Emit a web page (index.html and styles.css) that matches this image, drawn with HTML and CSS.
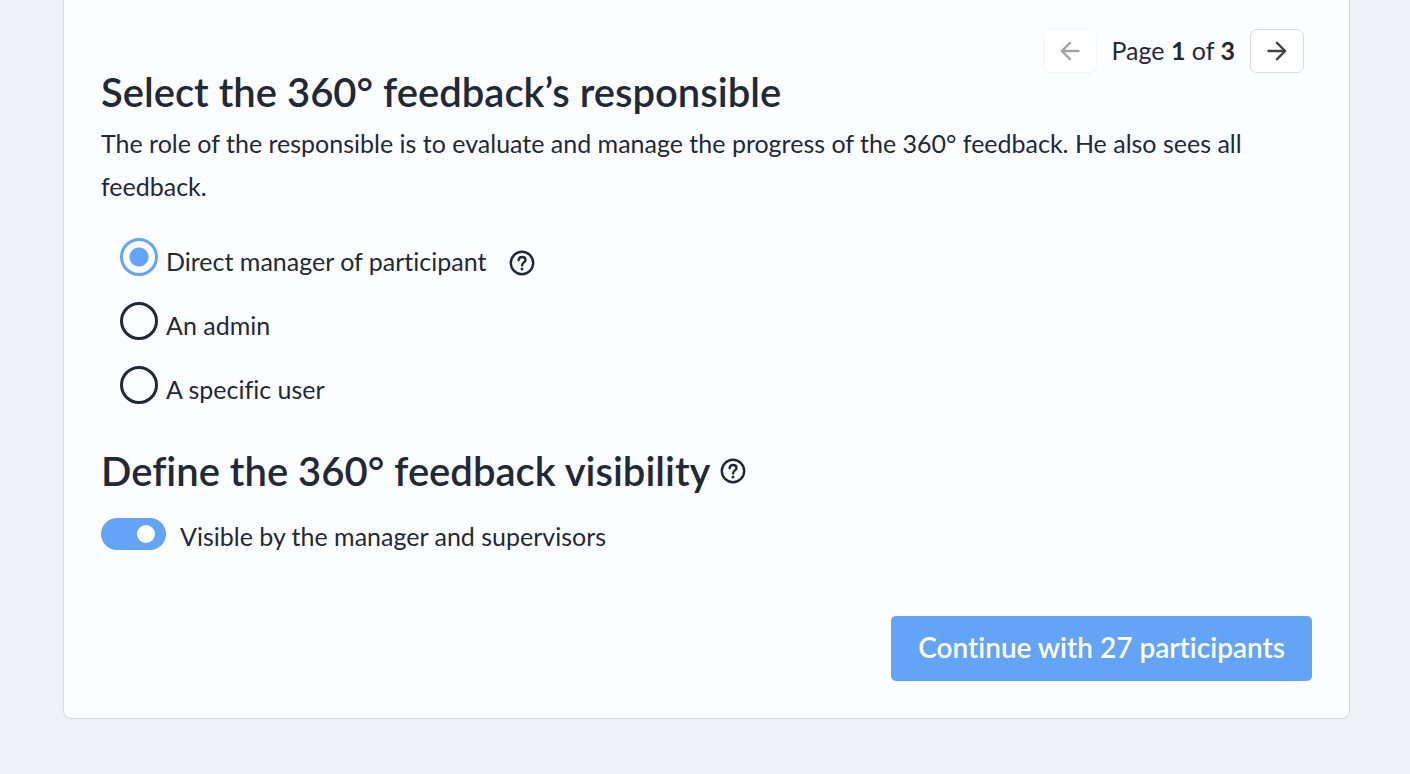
FILE: index.html
```html
<!DOCTYPE html>
<html lang="en">
<head>
    <meta charset="UTF-8">
    <meta name="viewport" content="width=device-width, initial-scale=1.0">
    <title>360° feedback</title>
    <link rel="stylesheet" href="styles.css">
</head>
<body>
    <form class="card">
        <div class="pager">
            <button type="button" class="pager-btn" aria-label="Previous page" disabled>
                <svg class="arrow" viewBox="0 0 20 20"><path d="M18.5 10H2M10 1.8L1.8 10L10 18.2"/></svg>
            </button>
            <span class="pager-text">Page <b>1</b> of <b>3</b></span>
            <button type="button" class="pager-btn" aria-label="Next page">
                <svg class="arrow" viewBox="0 0 20 20"><path d="M1.5 10H18M10 1.8L18.2 10L10 18.2"/></svg>
            </button>
        </div>

        <h2 class="title">Select the 360° feedback’s responsible</h2>
        <p class="description">The role of the responsible is to evaluate and manage the progress of the 360° feedback. He also sees all feedback.</p>

        <div class="options">
            <div class="option">
                <input type="radio" name="responsible" id="manager" class="radio" checked>
                <label for="manager" class="option-label">Direct manager of participant</label>
                <svg class="help" viewBox="0 0 26 26">
                    <circle cx="13" cy="13" r="11.2"/>
                    <path d="M9.6 10.2C9.8 8.1 11.2 7 13 7C15.1 7 16.5 8.2 16.5 9.9C16.5 12.3 13.1 12.6 13.1 15.4"/>
                    <circle class="help-dot" cx="13" cy="18.9" r="1.5"/>
                </svg>
            </div>
            <div class="option">
                <input type="radio" name="responsible" id="admin" class="radio">
                <label for="admin" class="option-label">An admin</label>
            </div>
            <div class="option">
                <input type="radio" name="responsible" id="user" class="radio">
                <label for="user" class="option-label">A specific user</label>
            </div>
        </div>

        <div class="title-row">
            <h2 class="title">Define the 360° feedback visibility</h2>
            <svg class="help" viewBox="0 0 26 26">
                <circle cx="13" cy="13" r="11.2"/>
                <path d="M9.6 10.2C9.8 8.1 11.2 7 13 7C15.1 7 16.5 8.2 16.5 9.9C16.5 12.3 13.1 12.6 13.1 15.4"/>
                <circle class="help-dot" cx="13" cy="18.9" r="1.5"/>
            </svg>
        </div>
        <div class="switch-row">
            <input type="checkbox" id="visible" class="switch" checked>
            <label for="visible" class="switch-label">Visible by the manager and supervisors</label>
        </div>

        <div class="actions">
            <button type="submit" class="btn">Continue with 27 participants</button>
        </div>
    </form>
</body>
</html>
```
FILE: styles.css
```css
* {
    box-sizing: border-box;
}

body {
    margin: 0;
    padding: 0 60px 55px 63px;
    background-color: #f0f1f6;
    color: #1f2937;
    font-family: Lato, "Open Sans", sans-serif;
    font-size: 25px;
    font-variant-ligatures: none;
}

.card {
    padding: 29px 37px 37px;
    border: 1px solid #d9dadd;
    border-top: none;
    border-radius: 0 0 8px 8px;
    background-color: #fcfdff;
}

.pager {
    display: flex;
    align-items: center;
    justify-content: flex-end;
    gap: 15px;
    padding-right: 8px;
}

.pager-text {
    padding-bottom: 2px;
}

.pager-btn {
    display: flex;
    align-items: center;
    justify-content: center;
    width: 54px;
    height: 44px;
    padding: 0;
    border: 1px solid #d9dadd;
    border-radius: 7px;
    background-color: white;
    cursor: pointer;
}

.pager-btn:disabled {
    border-color: #f5f5f7;
    cursor: default;
}

.arrow {
    width: 20px;
    height: 20px;
    fill: none;
    stroke: #444;
    stroke-width: 2.4;
    stroke-linecap: round;
    stroke-linejoin: round;
}

.pager-btn:disabled .arrow {
    stroke: #a3a3a3;
}

.title {
    margin: 0;
    font-size: 40px;
    font-weight: 600;
    line-height: 38px;
}

.description {
    margin: 11px 0 30px;
    line-height: 43px;
}

.options {
    display: flex;
    flex-direction: column;
    gap: 26px;
    padding-left: 19px;
}

.option {
    display: flex;
    align-items: flex-start;
    height: 38px;
}

.radio {
    flex: none;
    width: 38px;
    height: 38px;
    margin: 0 8px 0 0;
    border: 3px solid #1f2937;
    border-radius: 50%;
    appearance: none;
    cursor: pointer;
}

.radio:checked {
    border-color: #64a4f6;
    background: radial-gradient(circle, #64a4f6 9px, transparent 10px);
}

.option-label {
    padding-top: 7px;
    line-height: 32px;
}

.help {
    flex: none;
    width: 26px;
    height: 26px;
    fill: none;
    stroke: #1f2937;
    stroke-width: 2.4;
    stroke-linecap: round;
}

.help-dot {
    fill: #1f2937;
    stroke: none;
}

.option .help {
    margin: 12px 0 0 23px;
}

.title-row {
    display: flex;
    align-items: center;
    gap: 10px;
    margin-top: 48px;
}

.switch-row {
    display: flex;
    align-items: flex-start;
    gap: 14px;
    margin-top: 28px;
}

.switch {
    display: flex;
    align-items: center;
    flex: none;
    width: 65px;
    height: 32px;
    margin: 0;
    padding: 0 11px;
    border-radius: 16px;
    background-color: #9ca3af;
    appearance: none;
    cursor: pointer;
}

.switch::before {
    content: "";
    width: 18px;
    height: 18px;
    border-radius: 50%;
    background-color: white;
}

.switch:checked {
    justify-content: flex-end;
    background-color: #64a4f6;
}

.switch-label {
    padding-top: 2px;
    line-height: 32px;
}

.actions {
    display: flex;
    justify-content: flex-end;
    margin-top: 64px;
}

.btn {
    height: 65px;
    padding: 0 27px 4px;
    border: none;
    border-radius: 5px;
    background-color: #64a4f6;
    color: white;
    font-family: inherit;
    font-size: 28px;
    font-weight: 600;
    font-variant-ligatures: none;
    cursor: pointer;
}
```
